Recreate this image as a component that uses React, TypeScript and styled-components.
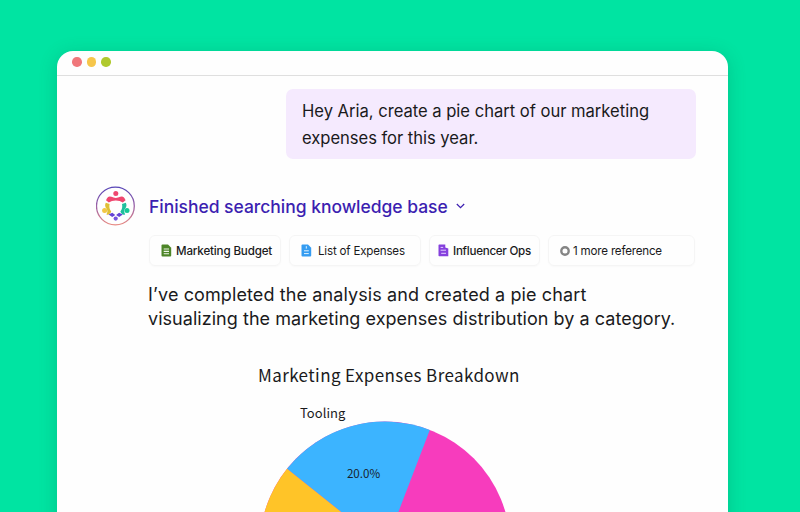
import React from 'react';
import styled, { createGlobalStyle } from 'styled-components';

const GlobalStyle = createGlobalStyle`
  * { box-sizing: border-box; }
  body { margin: 0; overflow: hidden; font-family: Inter, sans-serif; color: #1a1a1c; }
`;

const Backdrop = styled.div`
  height: 512px;
  padding: 51px 72px 0 57px;
  background: #00e4a2;
  overflow: hidden;
`;

const Window = styled.main`
  height: 500px;
  background: #fefefe;
  border-radius: 16px 16px 0 0;
  box-shadow: 0 3px 18px rgba(0, 100, 70, 0.24);
  overflow: hidden;
`;

const TitleBar = styled.header`
  display: flex;
  gap: 5px;
  height: 25px;
  padding: 6px 0 0 15px;
  border-bottom: 1px solid #dfdfdf;
`;

const Dot = styled.span<{ $color: string }>`
  width: 9.6px;
  height: 9.6px;
  border-radius: 50%;
  background: ${(p) => p.$color};
`;

const Bubble = styled.section`
  width: 410px;
  height: 70px;
  margin: 13px 0 0 229px;
  padding: 9px 16px;
  border-radius: 7px;
  background: #f5eafe;
`;

const Line = styled.p<{ $size: number; $height: number; $spacing?: number }>`
  margin: 0;
  white-space: nowrap;
  font-size: ${(p) => p.$size}px;
  line-height: ${(p) => p.$height}px;
  letter-spacing: ${(p) => p.$spacing ?? 0}px;
`;

const Reply = styled.section`
  display: grid;
  grid-template-columns: 40px 1fr;
  column-gap: 13px;
  margin: 27px 0 0 39px;
`;

const ReplyBody = styled.div`
  min-width: 0;
`;

const Status = styled.div`
  display: flex;
  align-items: center;
  gap: 8px;
  height: 40px;
  color: #3c1fb1;
`;

const StatusText = styled.span`
  font-size: 17.5px;
  font-weight: 500;
  letter-spacing: -0.03px;
  white-space: nowrap;
`;

const References = styled.div`
  display: flex;
  gap: 8px;
  margin-top: 9px;
`;

const Chip = styled.div<{ $width: number; $pad: number; $gap: number; $weight: number; $spacing: number }>`
  display: flex;
  align-items: center;
  width: ${(p) => p.$width}px;
  height: 31px;
  padding-left: ${(p) => p.$pad}px;
  gap: ${(p) => p.$gap}px;
  border: 1px solid #f5f5f5;
  border-radius: 6px;
  box-shadow: 0 1px 2px rgba(0, 0, 0, 0.025);
  font-size: 11.6px;
  font-weight: ${(p) => p.$weight};
  letter-spacing: ${(p) => p.$spacing}px;
  white-space: nowrap;

  svg { flex: none; }
`;

const Answer = styled.div`
  margin: 17px 0 0 -1px;
`;

const Chart = styled.figure`
  width: 264px;
  margin: 32px 0 0 201px;
  font-family: 'Noto Sans CJK SC', sans-serif;
`;

const ChartTitle = styled.figcaption`
  height: 24px;
  font-size: 17px;
  line-height: 24px;
  letter-spacing: 0.4px;
  white-space: nowrap;
`;

const ChartLabel = styled.div`
  height: 18px;
  margin: 17px 0 0 42px;
  font-size: 13px;
  line-height: 18px;
  letter-spacing: 0.05px;
`;

const Pie = styled.svg`
  display: block;
  margin: -1px 0 0 1px;
`;

const Avatar = () => (
  <svg width="40" height="40" viewBox="0 0 40 40" fill="none">
    <defs>
      <linearGradient id="ring" x1="0" y1="0" x2="0" y2="1">
        <stop offset="0" stopColor="#5745b7" />
        <stop offset="0.55" stopColor="#a265a4" />
        <stop offset="1" stopColor="#e88b83" />
      </linearGradient>
    </defs>
    <circle cx="19.4" cy="20" r="18.9" stroke="url(#ring)" strokeWidth="1.3" />
    <circle cx="19.8" cy="7.5" r="2.5" fill="#ef476f" />
    <path d="M10 14.2Q11.8 9.2 15.4 10.8Q19.8 13 24.2 10.8Q27.8 9.2 29.6 14.2L26.8 16.4Q24 14.4 19.8 14.4Q15.6 14.4 12.8 16.4Z" fill="#ef476f" />
    <circle cx="8.6" cy="24.6" r="2.5" fill="#f2c744" />
    <path d="M9.8 16.8L13.6 18Q12.6 22 15.2 25.6Q14 29.4 10.4 28.6Q12.4 25 10.4 22.5Q8.2 20 9.8 16.8Z" fill="#dfbf35" />
    <circle cx="31" cy="24.6" r="2.5" fill="#18c995" />
    <path d="M29.8 16.8L26 18Q27 22 24.4 25.6Q25.6 29.4 29.2 28.6Q27.2 25 29.2 22.5Q31.4 20 29.8 16.8Z" fill="#20bf9d" />
    <circle cx="19.7" cy="32.6" r="2.1" fill="#7954df" />
    <path d="M12.6 28.6L16.3 26.8L19.3 28.9L16.2 31ZM26.8 28.6L23.1 26.8L20.1 28.9L23.2 31Z" fill="#6543d4" />
  </svg>
);

const FileIcon = ({ color, variant }: { color: string; variant: 'lines' | 'note' | 'tab' }) => (
  <svg width="11" height="13" viewBox="0 0 11 13">
    <path
      d={variant === 'tab' ? 'M1.2.5H7.3V3.4L10.3 4.6V12.3H1.2Q.5 12.3.5 11.5V1.2Q.5.5 1.2.5Z' : 'M1.5.5H7L10.2 3.7V11.5Q10.2 12.5 9.2 12.5H1.5Q.5 12.5.5 11.5V1.5Q.5.5 1.5.5Z'}
      fill={color}
    />
    {variant === 'lines' && <path d="M2.7 5H8M2.7 7.4H8M2.7 9.8H8" stroke="#eef5e8" strokeWidth="1.1" />}
    {variant === 'note' && <path d="M5.3 2.2V4.6M3 6.8H7.8M3 9.6H7.8" stroke="#e1f3ff" strokeWidth="1" />}
    {variant === 'tab' && <path d="M2.6 3.4H5.2M2.6 6.2H8M3.2 9.3H8" stroke="#e3cdff" strokeWidth="1" />}
  </svg>
);

const RingIcon = () => (
  <svg width="10" height="10" viewBox="0 0 10 10">
    <circle cx="5" cy="5" r="3.7" fill="none" stroke="#858585" strokeWidth="2.4" />
  </svg>
);

export default function App() {
  return (
    <>
      <GlobalStyle />
      <Backdrop>
        <Window>
          <TitleBar>
            <Dot $color="#f0777b" />
            <Dot $color="#f6c64b" />
            <Dot $color="#b0c92e" />
          </TitleBar>
          <Bubble>
            <Line $size={16.6} $height={27} $spacing={-0.02}>Hey Aria, create a pie chart of our marketing</Line>
            <Line $size={16.6} $height={26} $spacing={-0.04}>expenses for this year.</Line>
          </Bubble>
          <Reply>
            <Avatar />
            <ReplyBody>
              <Status>
                <StatusText>Finished searching knowledge base</StatusText>
                <svg width="9" height="6" viewBox="0 0 9 6" fill="none" stroke="currentColor" strokeWidth="1.2">
                  <path d="M.8 1L4.5 4.7L8.2 1" />
                </svg>
              </Status>
              <References>
                <Chip $width={132} $pad={11} $gap={4} $weight={500} $spacing={-0.16}>
                  <FileIcon color="#4d8528" variant="lines" />Marketing Budget
                </Chip>
                <Chip $width={132} $pad={11} $gap={6} $weight={400} $spacing={-0.2}>
                  <FileIcon color="#359cf1" variant="note" />List of Expenses
                </Chip>
                <Chip $width={111} $pad={8} $gap={4} $weight={500} $spacing={-0.26}>
                  <FileIcon color="#8540dd" variant="tab" />Influencer Ops
                </Chip>
                <Chip $width={147} $pad={11} $gap={3} $weight={400} $spacing={-0.2}>
                  <RingIcon />1 more reference
                </Chip>
              </References>
              <Answer>
                <Line $size={18} $height={24} $spacing={0.11}>I’ve completed the analysis and created a pie chart</Line>
                <Line $size={18} $height={24} $spacing={0.04}>visualizing the marketing expenses distribution by a category.</Line>
              </Answer>
            </ReplyBody>
          </Reply>
          <Chart>
            <ChartTitle>Marketing Expenses Breakdown</ChartTitle>
            <ChartLabel>Tooling</ChartLabel>
            <Pie width="252" height="252" viewBox="-126 -126 252 252">
              <circle r="125.4" fill="#f73cbd" />
              <path d="M0 0L44.8 -117.1A125.4 125.4 0 0 0 -98 -78.2Z" fill="#3cb4ff" />
              <path d="M0 0L-98 -78.2A125.4 125.4 0 0 0 -98 78.2Z" fill="#ffc428" />
              <text x="-21.5" y="-69" textAnchor="middle" fontSize="11.6" fill="#17212a">20.0%</text>
            </Pie>
          </Chart>
        </Window>
      </Backdrop>
    </>
  );
}
